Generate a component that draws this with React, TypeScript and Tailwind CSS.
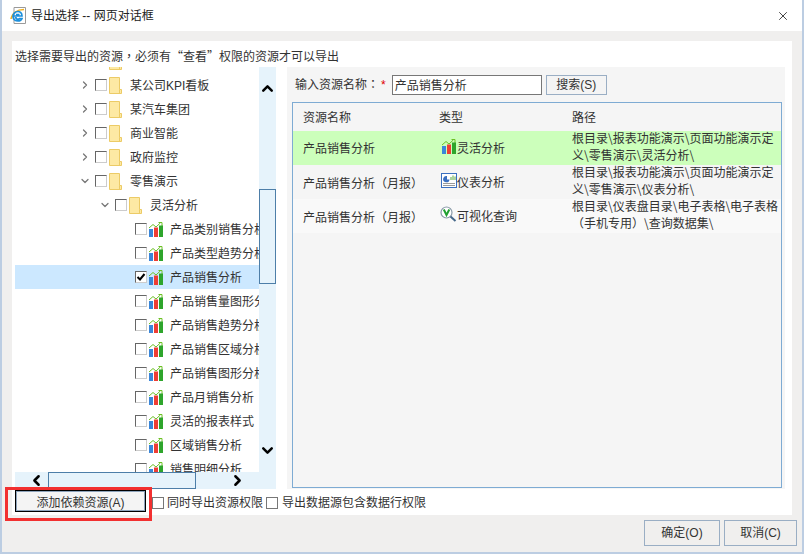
import { ChevronDown, ChevronLeft, ChevronRight, ChevronUp, X } from "lucide-react";

const cjk = "font-['Liberation_Sans','Noto_Sans_CJK_SC',sans-serif]";

// the dialog's font centres full-width punctuation, which the TC cut of Noto does too
function Punct({ text }: { text: string }) {
  return (
    <>
      {text.split(/([，：（）])/).map((part, i) =>
        /^[，：（）]$/.test(part) ? (
          <span key={i} className="font-['Noto_Sans_CJK_TC']">
            {part}
          </span>
        ) : (
          <span key={i}>{part}</span>
        ),
      )}
    </>
  );
}

function Check({ checked = false }: { checked?: boolean }) {
  return (
    <span className="flex h-3 w-3 shrink-0 items-center justify-center border border-t-[#666] border-l-[#666] border-r-[#ccc] border-b-[#ccc] bg-white">
      {checked && (
        <svg width="10" height="10" viewBox="0 0 10 10">
          <path d="M1.5 5 L4 7.5 L8.5 2" fill="none" stroke="#000" strokeWidth="2" />
        </svg>
      )}
    </span>
  );
}

function FolderIcon() {
  return (
    <svg width="13" height="17" viewBox="0 0 13 17" className="shrink-0">
      <path d="M.5.5 H10.5 V12.5 H12.5 V16.5 H.5 Z" fill="#fde9a4" stroke="#eccb66" />
      <path d="M10.5 12.5 V16.5" stroke="#eccb66" />
    </svg>
  );
}

function ChartIcon() {
  return (
    <svg width="14" height="15" viewBox="0 0 14 15" className="shrink-0">
      <path d="M0 6 L4 2.5 L7 5 L11.5 .8" fill="none" stroke="#6cc024" strokeWidth="1" />
      <path d="M9.5 .5 H13 V4" fill="none" stroke="#6cc024" strokeWidth="1" />
      <rect x="0" y="7" width="4" height="8" fill="#3b86d8" />
      <rect x="5" y="5.5" width="4" height="9.5" fill="#ee3d35" />
      <rect x="10" y="3.5" width="4" height="11.5" fill="#2ea52c" />
    </svg>
  );
}

function GaugeIcon() {
  return (
    <svg width="16" height="15" viewBox="0 0 16 15" className="shrink-0">
      <rect x=".5" y=".5" width="15" height="14" fill="#fff" stroke="#3a6fc0" />
      <path d="M6 3 A3.2 3.2 0 1 0 8.5 6.5 H6 Z" fill="#3a6fc0" />
      <path d="M10 7V4M12 7V2.5M14 7V3.5" stroke="#5aa83c" />
      <path d="M2 10.5H14M2 12.5H14" stroke="#9a9a9a" />
    </svg>
  );
}

function QueryIcon() {
  return (
    <svg width="17" height="16" viewBox="0 0 17 16" className="shrink-0">
      <circle cx="6.5" cy="6.5" r="5.5" fill="#fff" stroke="#8a9aa8" strokeWidth="1.2" />
      <path d="M3.8 3.5 L6.5 9 L9.3 3.5" fill="none" stroke="#20a030" strokeWidth="2" />
      <path d="M10.5 10.5 L15.5 15" stroke="#46688a" strokeWidth="2" />
    </svg>
  );
}

function IeIcon() {
  return (
    <svg width="16" height="17" viewBox="0 0 16 17" className="shrink-0">
      <path d="M4 .5 H15.5 V16.5 H4 Z" fill="#fff" stroke="#9a9a9a" />
      <path d="M1 12 C2 6 7 2.5 14 2.5" fill="none" stroke="#f0b020" strokeWidth="1.5" />
      <path d="M3.5 9 H12 C12 5.5 9.5 4.5 8 4.5 C5 4.5 3 7 3 9.5 C3 12.5 5.5 14 8 14 C10 14 11.5 13 12 11.5 H9.5 C9 12.3 8.5 12.3 8 12.3 C6.5 12.3 5.8 11 5.8 10 M6 7.7 H9.5" fill="none" stroke="#1b8fdc" strokeWidth="1.7" />
    </svg>
  );
}

const folders = ["某公司KPI看板", "某汽车集团", "商业智能", "政府监控"];
const leaves = [
  "产品类别销售分析",
  "产品类型趋势分析",
  "产品销售分析",
  "产品销售量图形分析",
  "产品销售趋势分析",
  "产品销售区域分析",
  "产品销售图形分析",
  "产品月销售分析",
  "灵活的报表样式",
  "区域销售分析",
  "销售明细分析",
];

function FolderRow({ name, level, open }: { name: string; level: 2 | 3; open?: boolean }) {
  return (
    <div className={`flex h-6 items-center ${level === 2 ? "pl-16" : "pl-[84px]"}`}>
      <span className="flex w-4 shrink-0 justify-center pr-1 text-[#777]">
        {open ? <ChevronDown size={14} strokeWidth={2.5} /> : <ChevronRight size={14} strokeWidth={2.5} />}
      </span>
      <Check />
      <span className="ml-[2px]">
        <FolderIcon />
      </span>
      <span className="ml-[8px] whitespace-nowrap pt-[2px]">{name}</span>
    </div>
  );
}

function LeafRow({ name }: { name: string }) {
  const selected = name === "产品销售分析";
  return (
    <div className={`flex h-6 items-center pl-[120px] ${selected ? "bg-[#cce8ff]" : ""}`}>
      <Check checked={selected} />
      <span className="ml-[2px]">
        <ChartIcon />
      </span>
      <span className="ml-[7px] whitespace-nowrap pt-[2px]">{name}</span>
    </div>
  );
}

const results = [
  {
    name: "产品销售分析",
    type: "灵活分析",
    icon: <ChartIcon />,
    path: "根目录\\报表功能演示\\页面功能演示定义\\零售演示\\灵活分析\\",
    bg: "bg-[#ccffbb]",
  },
  {
    name: "产品销售分析（月报）",
    type: "仪表分析",
    icon: <GaugeIcon />,
    path: "根目录\\报表功能演示\\页面功能演示定义\\零售演示\\仪表分析\\",
    bg: "bg-[#f5f5f5]",
  },
  {
    name: "产品销售分析（月报）",
    type: "可视化查询",
    icon: <QueryIcon />,
    path: "根目录\\仪表盘目录\\电子表格\\电子表格（手机专用）\\查询数据集\\",
    bg: "bg-[#f9f9f9]",
  },
];

export default function App() {
  return (
    <div className={`relative flex h-[554px] w-[804px] flex-col border-x-2 border-b-2 border-[#bccde2] bg-[#f0efee] text-xs text-[#333] ${cjk}`}>
      {/* title bar */}
      <div className="flex h-[31px] shrink-0 items-center justify-between bg-white pl-[8px] pr-[12px]">
        <div className="flex items-center gap-[5px]">
          <IeIcon />
          <span className="text-[#222]">导出选择 -- 网页对话框</span>
        </div>
        <X size={14} strokeWidth={1.25} className="text-black" />
      </div>

      {/* body */}
      <div className="mx-[10px] mt-[10px] flex h-[474px] flex-col bg-white">
        <div className="flex h-[26px] shrink-0 items-end pb-[2px] pl-[3px]">
          <span className="whitespace-nowrap">
            <Punct text="选择需要导出的资源，必须有" />
            <span className="font-['Noto_Sans_CJK_SC']">“查看”</span>权限的资源才可以导出
          </span>
        </div>

        <div className="flex h-[422px] pl-[3px]">
          {/* tree */}
          <div className="flex w-[261px] shrink-0 flex-col">
            <div className="flex h-[405px]">
              <div className="h-full w-[244px] overflow-hidden">
                <div className="-mt-[18px]">
                  <FolderRow name="某银行分析" level={2} />
                  {folders.map((f) => (
                    <FolderRow key={f} name={f} level={2} />
                  ))}
                  <FolderRow name="零售演示" level={2} open />
                  <FolderRow name="灵活分析" level={3} open />
                  {leaves.map((l) => (
                    <LeafRow key={l} name={l} />
                  ))}
                </div>
              </div>
              <div className="flex h-full w-[17px] shrink-0 flex-col items-center bg-[#e6f3fb] text-black">
                <ChevronUp size={17} strokeWidth={3.5} className="mt-[13px] shrink-0" />
                <div className="mt-[92px] h-[95px] w-full shrink-0 border border-[#4d7ea8]" />
                <ChevronDown size={17} strokeWidth={3.5} className="mt-[158px] shrink-0" />
              </div>
            </div>
            <div className="flex h-[17px] items-center bg-[#e6f3fb] text-black">
              <ChevronLeft size={17} strokeWidth={3.5} className="ml-[13px] shrink-0" />
              <div className="ml-[3px] h-full w-[148px] shrink-0 border border-[#4d7ea8]" />
              <ChevronRight size={17} strokeWidth={3.5} className="ml-[33px] shrink-0" />
            </div>
          </div>

          {/* results */}
          <div className="ml-[11px] flex w-[498px] flex-col bg-[#f5f5f5] pl-[5px] pr-[3px] pt-[8px]">
            <div className="flex h-5 items-center">
              <span className="ml-[3px] -mt-[2px]">
                <Punct text="输入资源名称：" />
              </span>
              <span className="ml-[2px] text-[#e00000]">*</span>
              <div className="ml-[6px] flex h-5 w-[150px] items-center border border-[#777] bg-white pl-[2px] pt-[2px]">产品销售分析</div>
              <button className="ml-[4px] h-5 w-[61px] border border-[#9aaec4] bg-[#f4f4f4] text-center text-[#333]">搜索(S)</button>
            </div>
            <div className="mt-[7px] h-[386px] border border-[#7eabd3] bg-[#f5f5f5]">
              <div className="grid h-[28px] grid-cols-[136px_133px_1fr] items-center pl-[10px] pt-[2px]">
                <span>资源名称</span>
                <span>类型</span>
                <span>路径</span>
              </div>
              {results.map((r) => (
                <div key={r.path} className={`grid h-[34px] grid-cols-[136px_133px_1fr] items-center pl-[10px] ${r.bg}`}>
                  <span className="whitespace-nowrap pt-[2px]">
                    <Punct text={r.name} />
                  </span>
                  <span className="flex items-center">
                    <span className="-mt-[4px] ml-px flex w-[17px] shrink-0 justify-center">{r.icon}</span>
                    <span className="pt-[2px]">{r.type}</span>
                  </span>
                  <span className="-mt-[5px] break-all font-['Noto_Sans_CJK_SC'] leading-[17px]">
                    <Punct text={r.path} />
                  </span>
                </div>
              ))}
            </div>
          </div>
          <div className="flex-1" />
        </div>

        <div className="flex items-center pl-[3px] pt-px">
          <button className="h-[22px] w-[131px] border border-black bg-[#f4f4f4] pt-[3px] text-center shadow-[inset_0_0_0_1px_#8ea4bc]">添加依赖资源(A)</button>
          <span className="ml-[6px] mt-[3px] h-3 w-3 border border-[#777]" />
          <span className="ml-[3px] mt-[4px] whitespace-nowrap">同时导出资源权限</span>
          <span className="ml-[3px] mt-[3px] h-3 w-3 border border-[#777]" />
          <span className="ml-[4px] mt-[4px] whitespace-nowrap">导出数据源包含数据行权限</span>
        </div>
      </div>

      {/* footer */}
      <div className="mt-[5px] flex justify-end gap-[4px] pr-[5px]">
        <button className="h-[26px] w-[76px] border border-[#9aaec4] bg-[#f0efee] text-center">确定(O)</button>
        <button className="h-[26px] w-[73px] border border-[#9aaec4] bg-[#f0efee] text-center">取消(C)</button>
      </div>

      {/* red annotation */}
      <div className="absolute left-[3px] top-[487px] h-[34px] w-[147px] border-[3px] border-[#f23030]" />
    </div>
  );
}
